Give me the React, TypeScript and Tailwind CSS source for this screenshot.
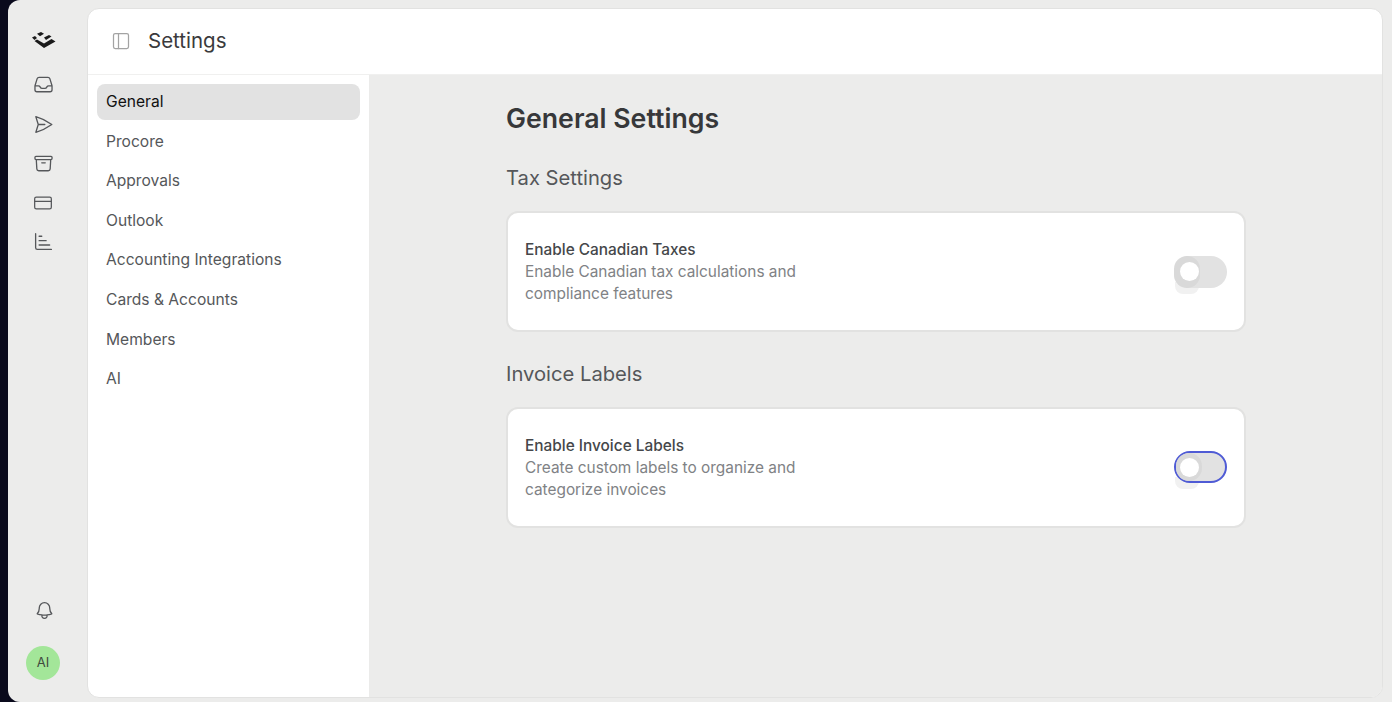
import { ChartBarIncreasing, CreditCard, PanelLeft } from "lucide-react";
import { HiOutlineInbox, HiOutlinePaperAirplane, HiOutlineArchiveBox, HiOutlineBell } from "react-icons/hi2";

const nav = ["General", "Procore", "Approvals", "Outlook", "Accounting Integrations", "Cards & Accounts", "Members", "AI"];

function Logo() {
  return (
    <svg width="26" height="18" viewBox="0 0 26 18" fill="#1a1a1a">
      <path d="M1 6.5 L4 5 L6 7 L3.5 9 Z" />
      <path d="M6 2.8 L10 1 L13 2.8 L9 5.2 Z" />
      <path d="M13 6.5 L18 4 L20.5 5.5 L15 9 Z" />
      <path d="M3.5 10 L6 8.5 L13 12.5 L20.5 8 L24.5 10.5 L13 17 Z" />
    </svg>
  );
}

function Toggle({ focused }: { focused?: boolean }) {
  return (
    <div className={`relative ${focused ? "-mt-[1px]" : ""}`}>
      <div className="absolute left-[1px] top-[26px] w-[24px] h-[12px] rounded-b-lg bg-[#f1f1f1]" />
      <div className={`relative flex items-center w-[53px] h-[32px] rounded-full bg-[#e2e2e2] ${focused ? "border-2 border-[#4f5bd5] pl-[4px]" : "pl-[6px]"}`}>
        <div className="relative z-10 w-[19px] h-[19px] rounded-full bg-white" />
        <div className="absolute left-0 top-0 w-[26px] h-full rounded-full bg-[#d9d9d9]" />
      </div>
    </div>
  );
}

function Card({ title, lines, focused }: { title: string; lines: string[]; focused?: boolean }) {
  return (
    <div className="flex items-center justify-between h-[121px] rounded-xl bg-white border-2 border-[#e2e2e1] pl-[17px] pr-[17px]">
      <div className="flex flex-col">
        <div className="text-[15.4px] leading-[22px] font-medium text-[#45474a]">{title}</div>
        {lines.map((l) => (
          <div key={l} className="text-[15.4px] leading-[22px] text-[#808285]">{l}</div>
        ))}
      </div>
      <Toggle focused={focused} />
    </div>
  );
}

export default function App() {
  return (
    <div className="h-[702px] w-[1392px] overflow-hidden bg-[#0a0a1c] font-['Inter',sans-serif]">
      <div className="ml-[8px] h-full flex rounded-l-xl bg-[#ececeb] pt-[8px] pb-[4px] pr-[9px]">
        <aside className="w-[79px] shrink-0 pr-[9px] flex flex-col items-center text-[#55575a]">
          <div className="mt-[21px] h-[22px] flex items-center ml-[1px]"><Logo /></div>
          <div className="mt-[23px] flex flex-col gap-[18.5px] ml-[1px]">
            <HiOutlineInbox size={21} />
            <HiOutlinePaperAirplane size={21} />
            <HiOutlineArchiveBox size={21} />
            <CreditCard size={20} strokeWidth={1.5} />
            <ChartBarIncreasing size={21} strokeWidth={1.5} />
          </div>
          <div className="mt-auto flex flex-col items-center">
            <HiOutlineBell size={21} className="ml-[2px]" />
            <div className="mt-[25px] mb-[18px] w-[34px] h-[34px] rounded-full bg-[#a3e699] flex items-center justify-center text-[13px] text-[#3f4a3e]">AI</div>
          </div>
        </aside>
        <main className="flex-1 flex flex-col rounded-xl bg-white border border-[#e2e2e1] overflow-hidden">
          <header className="h-[66px] shrink-0 flex items-center pl-[23px] pb-[1px] gap-[17px] border-b border-[#f0f0ef]">
            <PanelLeft size={20} strokeWidth={1.5} className="text-[#a3a3a3]" />
            <span className="text-[20.5px] text-[#3a3a3c]">Settings</span>
          </header>
          <div className="flex-1 flex min-h-0">
            <nav className="w-[282px] shrink-0 pl-[9px] pr-[9px] pt-[9px] flex flex-col gap-[4px] border-r border-[#ebebea]">
              {nav.map((n, i) => (
                <div key={n} className={`h-[35.6px] flex items-center px-[9px] rounded-lg text-[15.6px] ${i === 0 ? "bg-[#e2e2e2] text-[#111]" : "text-[#55575a]"}`}>{n}</div>
              ))}
            </nav>
            <section className="flex-1 bg-[#ececeb] pl-[136px] pr-[136px] pt-[25px]">
              <h1 className="text-[26.7px] leading-[36px] font-semibold text-[#37383a]">General Settings</h1>
              <h2 className="mt-[28px] text-[20.2px] leading-[28px] text-[#55575a]">Tax Settings</h2>
              <div className="mt-[19px]">
                <Card title="Enable Canadian Taxes" lines={["Enable Canadian tax calculations and", "compliance features"]} />
              </div>
              <h2 className="mt-[28px] text-[20.2px] leading-[28px] text-[#55575a]">Invoice Labels</h2>
              <div className="mt-[19px]">
                <Card title="Enable Invoice Labels" lines={["Create custom labels to organize and", "categorize invoices"]} focused />
              </div>
            </section>
          </div>
        </main>
      </div>
    </div>
  );
}
